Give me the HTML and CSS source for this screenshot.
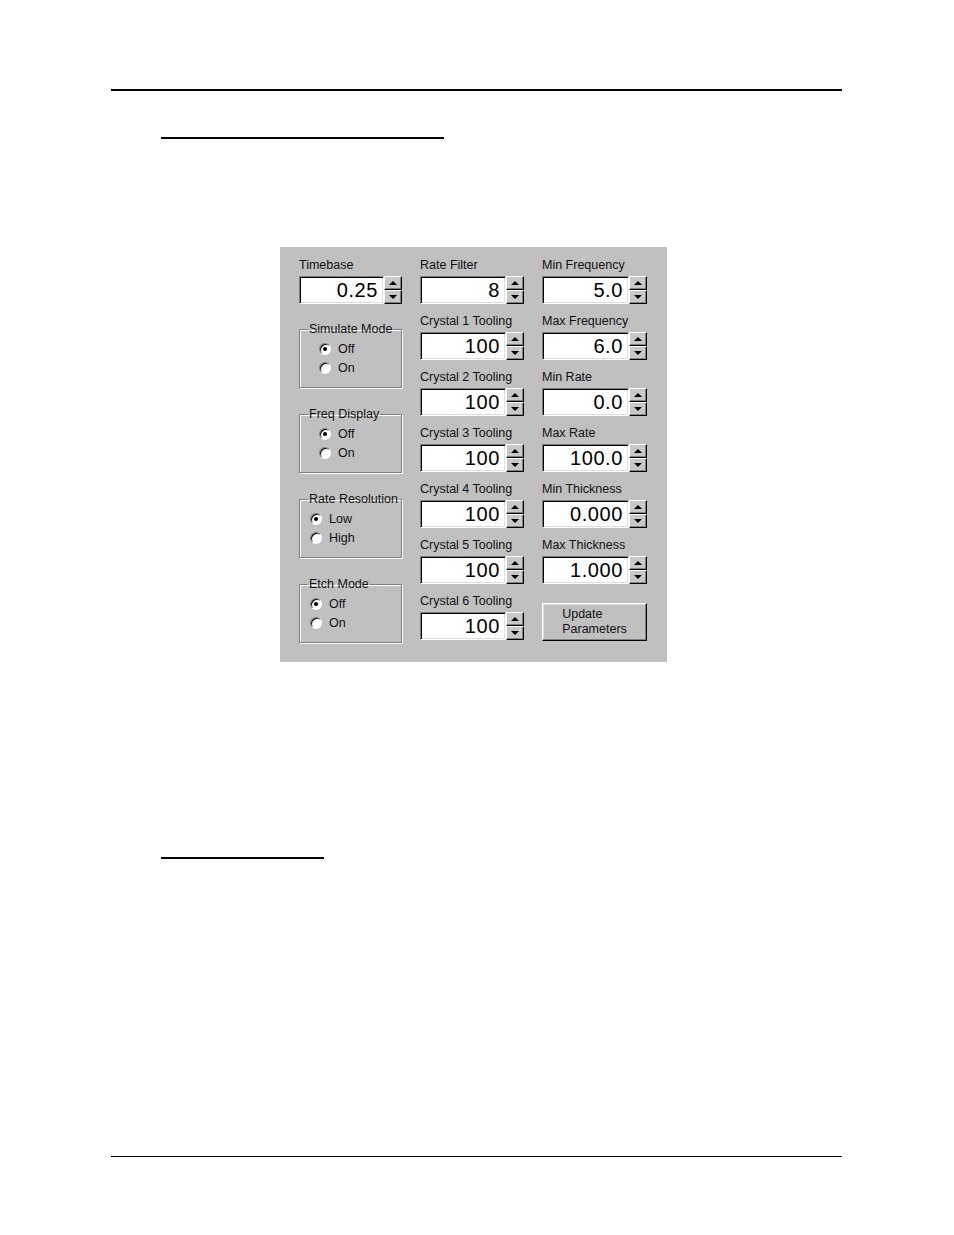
FILE: index.html
```html
<!DOCTYPE html>
<html>
<head>
<meta charset="utf-8">
<link rel="stylesheet" href="styles.css">
</head>
<body>
<div class="page">
  <div class="rule-top"></div>
  <div class="heading-line h1"></div>

  <div class="panel">
    <div class="col">
      <div class="field">
        <div class="label">Timebase</div>
        <div class="spin">
          <div class="edit">0.25</div>
          <div class="updown"><div class="btn up"><span></span></div><div class="btn down"><span></span></div></div>
        </div>
      </div>

      <fieldset class="group first">
        <legend>Simulate Mode</legend>
        <div class="radios wide">
          <div class="radio"><span class="dot on"></span>Off</div>
          <div class="radio"><span class="dot"></span>On</div>
        </div>
      </fieldset>

      <fieldset class="group">
        <legend>Freq Display</legend>
        <div class="radios wide">
          <div class="radio"><span class="dot on"></span>Off</div>
          <div class="radio"><span class="dot"></span>On</div>
        </div>
      </fieldset>

      <fieldset class="group">
        <legend>Rate Resolution</legend>
        <div class="radios">
          <div class="radio"><span class="dot on"></span>Low</div>
          <div class="radio"><span class="dot"></span>High</div>
        </div>
      </fieldset>

      <fieldset class="group">
        <legend>Etch Mode</legend>
        <div class="radios">
          <div class="radio"><span class="dot on"></span>Off</div>
          <div class="radio"><span class="dot"></span>On</div>
        </div>
      </fieldset>
    </div>

    <div class="col">
      <div class="field"><div class="label">Rate Filter</div><div class="spin"><div class="edit">8</div><div class="updown"><div class="btn up"><span></span></div><div class="btn down"><span></span></div></div></div></div>
      <div class="field"><div class="label">Crystal 1 Tooling</div><div class="spin"><div class="edit">100</div><div class="updown"><div class="btn up"><span></span></div><div class="btn down"><span></span></div></div></div></div>
      <div class="field"><div class="label">Crystal 2 Tooling</div><div class="spin"><div class="edit">100</div><div class="updown"><div class="btn up"><span></span></div><div class="btn down"><span></span></div></div></div></div>
      <div class="field"><div class="label">Crystal 3 Tooling</div><div class="spin"><div class="edit">100</div><div class="updown"><div class="btn up"><span></span></div><div class="btn down"><span></span></div></div></div></div>
      <div class="field"><div class="label">Crystal 4 Tooling</div><div class="spin"><div class="edit">100</div><div class="updown"><div class="btn up"><span></span></div><div class="btn down"><span></span></div></div></div></div>
      <div class="field"><div class="label">Crystal 5 Tooling</div><div class="spin"><div class="edit">100</div><div class="updown"><div class="btn up"><span></span></div><div class="btn down"><span></span></div></div></div></div>
      <div class="field"><div class="label">Crystal 6 Tooling</div><div class="spin"><div class="edit">100</div><div class="updown"><div class="btn up"><span></span></div><div class="btn down"><span></span></div></div></div></div>
    </div>

    <div class="col">
      <div class="field"><div class="label">Min Frequency</div><div class="spin"><div class="edit">5.0</div><div class="updown"><div class="btn up"><span></span></div><div class="btn down"><span></span></div></div></div></div>
      <div class="field"><div class="label">Max Frequency</div><div class="spin"><div class="edit">6.0</div><div class="updown"><div class="btn up"><span></span></div><div class="btn down"><span></span></div></div></div></div>
      <div class="field"><div class="label">Min Rate</div><div class="spin"><div class="edit">0.0</div><div class="updown"><div class="btn up"><span></span></div><div class="btn down"><span></span></div></div></div></div>
      <div class="field"><div class="label">Max Rate</div><div class="spin"><div class="edit">100.0</div><div class="updown"><div class="btn up"><span></span></div><div class="btn down"><span></span></div></div></div></div>
      <div class="field"><div class="label">Min Thickness</div><div class="spin"><div class="edit">0.000</div><div class="updown"><div class="btn up"><span></span></div><div class="btn down"><span></span></div></div></div></div>
      <div class="field"><div class="label">Max Thickness</div><div class="spin"><div class="edit">1.000</div><div class="updown"><div class="btn up"><span></span></div><div class="btn down"><span></span></div></div></div></div>
      <div class="push"><span class="push-text">Update<br>Parameters</span></div>
    </div>
  </div>

  <div class="heading-line h2"></div>
  <div class="rule-bottom"></div>
</div>
</body>
</html>
```

FILE: styles.css
```css
html, body {
  margin: 0;
  padding: 0;
  background: #fff;
}

.page {
  padding: 0 112px 0 111px;
  font-family: "Liberation Sans", Arial, sans-serif;
  color: #000;
}

.rule-top {
  margin-top: 89px;
  height: 2px;
  background: #000;
}

.heading-line {
  height: 2px;
  background: #000;
  margin-left: 50px;
}

.h1 {
  margin-top: 46px;
  width: 283px;
}

.h2 {
  margin-top: 195px;
  width: 163px;
}

.rule-bottom {
  margin-top: 297px;
  height: 1px;
  background: #000;
}

/* dialog panel */
.panel {
  margin-top: 108px;
  margin-left: 169px;
  width: 387px;
  height: 415px;
  box-sizing: border-box;
  background: #c0c0c0;
  padding: 9px 20px 0 19px;
  display: grid;
  grid-template-columns: 103px 104px 105px;
  column-gap: 18px;
  align-items: start;
}

.col {
  display: flex;
  flex-direction: column;
  gap: 8px;
}

.field {
  display: flex;
  flex-direction: column;
}

.label {
  font-size: 12.5px;
  line-height: 16px;
  height: 16px;
  margin-bottom: 4px;
  white-space: nowrap;
  color: #111;
  padding-top: 1px;
  box-sizing: border-box;
}

.spin {
  display: flex;
  height: 28px;
}

.edit {
  flex: 1;
  box-sizing: border-box;
  height: 28px;
  background: #fff;
  border: 1px solid;
  border-color: #808080 #fff #fff #808080;
  box-shadow: inset 1px 1px 0 #000, inset -1px -1px 0 #dfdfdf;
  font-size: 20px;
  line-height: 26px;
  letter-spacing: 0.6px;
  text-align: right;
  padding-right: 5px;
}

.updown {
  width: 18px;
  display: flex;
  flex-direction: column;
}

.btn {
  flex: 1;
  box-sizing: border-box;
  background: #c8c8c8;
  border: 1px solid;
  border-color: #fff #000 #000 #fff;
  box-shadow: inset -1px -1px 0 #808080;
  display: flex;
  align-items: center;
  justify-content: center;
}

.btn span {
  width: 0;
  height: 0;
  border-left: 4px solid transparent;
  border-right: 4px solid transparent;
}

.up span {
  border-bottom: 4px solid #000;
}

.down span {
  border-top: 4px solid #000;
}

/* group boxes */
.group {
  margin: 11px 0 0 0;
  padding: 3px 0 10px 0;
  border: 1px solid #808080;
  box-shadow: inset 1px 1px 0 #fff, 1px 1px 0 #fff;
  min-width: 0;
}

.group.first {
  margin-top: 10px;
}

.group legend {
  margin-left: 8px;
  padding: 0 1px;
  font-size: 12.5px;
  line-height: 14px;
  color: #111;
}

.radios {
  padding-left: 10px;
}

.radios.wide {
  padding-left: 19px;
}

.radio {
  display: flex;
  align-items: center;
  height: 19px;
  font-size: 12.5px;
  color: #111;
}

.dot {
  width: 12px;
  height: 12px;
  box-sizing: border-box;
  border-radius: 50%;
  background: #fff;
  border: 1px solid;
  border-color: #808080 #fff #fff #808080;
  box-shadow: inset 1px 1px 0 #000;
  margin-right: 7px;
  display: flex;
  align-items: center;
  justify-content: center;
}

.dot.on::after {
  content: "";
  width: 4px;
  height: 4px;
  border-radius: 50%;
  background: #000;
}

/* push button */
.push {
  margin-top: 11px;
  height: 38px;
  box-sizing: border-box;
  background: #c0c0c0;
  border: 1px solid;
  border-color: #fff #000 #000 #fff;
  box-shadow: inset -1px -1px 0 #808080, inset 1px 1px 0 #dfdfdf;
  display: flex;
  align-items: center;
  justify-content: center;
}

.push-text {
  font-size: 12.5px;
  line-height: 15px;
  text-align: left;
  color: #111;
}
```
